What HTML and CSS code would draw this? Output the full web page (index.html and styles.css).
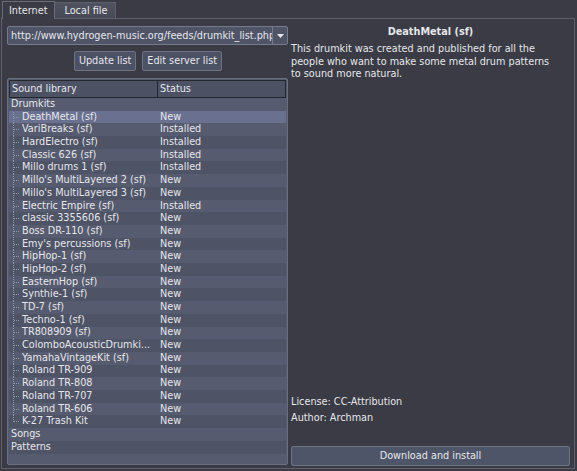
FILE: index.html
```html
<!DOCTYPE html>
<html>
<head>
<meta charset="utf-8">
<link rel="stylesheet" href="styles.css">
</head>
<body>
<div class="tabbar">
  <div class="tab active">Internet</div>
  <div class="tab">Local file</div>
</div>
<div class="pane">
  <div class="left">
    <div class="combo">
      <div class="combo-text">http://www.hydrogen-music.org/feeds/drumkit_list.php</div>
      <div class="combo-arrow"><svg width="7" height="4" viewBox="0 0 7 4"><path d="M0 0h7L3.5 4z" fill="#e8e8ee"/></svg></div>
    </div>
    <div class="buttons">
      <div class="btn">Update list</div>
      <div class="btn">Edit server list</div>
    </div>
    <div class="tree">
      <div class="header">
        <div class="hcell c1">Sound library</div>
        <div class="hcell c2">Status</div>
      </div>
      <div class="rows">
        <div class="row top"><div class="c1">Drumkits</div><div class="c2"></div></div>
        <div class="children">
          <div class="row item sel"><div class="c1">DeathMetal (sf)</div><div class="c2">New</div></div>
          <div class="row item"><div class="c1">VariBreaks (sf)</div><div class="c2">Installed</div></div>
          <div class="row item"><div class="c1">HardElectro (sf)</div><div class="c2">Installed</div></div>
          <div class="row item"><div class="c1">Classic 626 (sf)</div><div class="c2">Installed</div></div>
          <div class="row item"><div class="c1">Millo drums 1 (sf)</div><div class="c2">Installed</div></div>
          <div class="row item"><div class="c1">Millo's MultiLayered 2 (sf)</div><div class="c2">New</div></div>
          <div class="row item"><div class="c1">Millo's MultiLayered 3 (sf)</div><div class="c2">New</div></div>
          <div class="row item"><div class="c1">Electric Empire (sf)</div><div class="c2">Installed</div></div>
          <div class="row item"><div class="c1">classic 3355606 (sf)</div><div class="c2">New</div></div>
          <div class="row item"><div class="c1">Boss DR-110 (sf)</div><div class="c2">New</div></div>
          <div class="row item"><div class="c1">Emy's percussions (sf)</div><div class="c2">New</div></div>
          <div class="row item"><div class="c1">HipHop-1 (sf)</div><div class="c2">New</div></div>
          <div class="row item"><div class="c1">HipHop-2 (sf)</div><div class="c2">New</div></div>
          <div class="row item"><div class="c1">EasternHop (sf)</div><div class="c2">New</div></div>
          <div class="row item"><div class="c1">Synthie-1 (sf)</div><div class="c2">New</div></div>
          <div class="row item"><div class="c1">TD-7 (sf)</div><div class="c2">New</div></div>
          <div class="row item"><div class="c1">Techno-1 (sf)</div><div class="c2">New</div></div>
          <div class="row item"><div class="c1">TR808909 (sf)</div><div class="c2">New</div></div>
          <div class="row item"><div class="c1">ColomboAcousticDrumki...</div><div class="c2">New</div></div>
          <div class="row item"><div class="c1">YamahaVintageKit (sf)</div><div class="c2">New</div></div>
          <div class="row item"><div class="c1">Roland TR-909</div><div class="c2">New</div></div>
          <div class="row item"><div class="c1">Roland TR-808</div><div class="c2">New</div></div>
          <div class="row item"><div class="c1">Roland TR-707</div><div class="c2">New</div></div>
          <div class="row item"><div class="c1">Roland TR-606</div><div class="c2">New</div></div>
          <div class="row item last"><div class="c1">K-27 Trash Kit</div><div class="c2">New</div></div>
        </div>
        <div class="row top"><div class="c1">Songs</div><div class="c2"></div></div>
        <div class="row top"><div class="c1">Patterns</div><div class="c2"></div></div>
      </div>
    </div>
  </div>
  <div class="right">
    <div class="title">DeathMetal (sf)</div>
    <div class="desc">This drumkit was created and published for all the<br>people who want to make some metal drum patterns<br>to sound more natural.</div>
    <div class="spacer"></div>
    <div class="meta">License: CC-Attribution</div>
    <div class="meta">Author: Archman</div>
    <div class="dl">Download and install</div>
  </div>
</div>
</body>
</html>
```

FILE: styles.css
```css
html, body {
  margin: 0;
  padding: 0;
}
body {
  width: 577px;
  height: 471px;
  overflow: hidden;
  background: #3a3b44;
  font-family: "DejaVu Sans", sans-serif;
  font-size: 9.7px;
  color: #e6e7ec;
}
.tabbar {
  display: flex;
  align-items: flex-end;
  height: 18px;
  padding-left: 2px;
}
.tab {
  height: 15px;
  line-height: 15px;
  padding: 0 8px 0 9px;
  border: 1px solid #5e616c;
  border-bottom: none;
  background: linear-gradient(#50535f, #474a56);
  margin-left: -1px;
}
.tab.active {
  height: 17px;
  line-height: 18px;
  padding: 0 7px 0 6px;
  margin-left: 0;
  background: #3a3b44;
  position: relative;
  z-index: 1;
  margin-bottom: -1px;
  border-color: #6a6d78;
}
.pane {
  border: 1px solid #5e616c;
  margin: 0 2px 0 1px;
  height: 441px;
  padding: 7px 4px 1px 5px;
  display: flex;
  gap: 3px;
}
.left {
  width: 281px;
  display: flex;
  flex-direction: column;
}
.combo {
  height: 17px;
  border: 1px solid #767b8c;
  border-radius: 2px;
  background: #4f5467;
  display: flex;
}
.combo-text {
  flex: 1;
  padding-left: 3px;
  line-height: 17px;
  white-space: nowrap;
  overflow: hidden;
}
.combo-arrow {
  width: 14px;
  border-left: 1px solid #767b8c;
  display: flex;
  align-items: center;
  justify-content: center;
}
.buttons {
  display: flex;
  justify-content: center;
  gap: 6px;
  margin-top: 6px;
  padding-left: 1px;
}
.btn {
  height: 18px;
  line-height: 18px;
  padding: 0 4px;
  border: 1px solid #6d7284;
  border-radius: 2px;
  background: #4c5164;
}
.tree {
  margin-top: 7px;
  height: 383px;
  border: 1px solid #6a6f80;
  border-radius: 2px;
  padding: 1px;
  background: #565b6f;
  display: flex;
  flex-direction: column;
  overflow: hidden;
}
.header {
  display: flex;
  height: 18px;
  flex: none;
}
.hcell {
  border: 1px solid #24262e;
  background: #4c5164;
  line-height: 16px;
  padding-left: 2px;
  box-sizing: border-box;
}
.hcell.c1 { width: 149px; }
.hcell.c2 { flex: 1; border-left: none; }
.rows {
  flex: 1;
  background: repeating-linear-gradient(#565b6f 0, #565b6f 12.7px, #4e5366 12.7px, #4e5366 25.4px);
}
.row {
  display: flex;
  height: 12.7px;
  line-height: 12.7px;
}
.row .c1 {
  width: 149px;
  padding-left: 2px;
  box-sizing: border-box;
  white-space: nowrap;
  overflow: hidden;
}
.row .c2 { flex: 1; padding-left: 2px; }
.item .c1 {
  padding-left: 13px;
  background-image:
    repeating-linear-gradient(0deg, #9298ab 0 1px, transparent 1px 2px),
    repeating-linear-gradient(90deg, #9298ab 0 1px, transparent 1px 2px);
  background-size: 1px 100%, 6px 1px;
  background-position: 4px 0, 5px 6px;
  background-repeat: no-repeat;
}
.item.last .c1 {
  background-size: 1px 7px, 6px 1px;
}
.sel { background: #6a7190; }
.right {
  flex: 1;
  display: flex;
  flex-direction: column;
}
.title {
  text-align: center;
  font-weight: bold;
  margin-top: -1px;
  line-height: 13px;
}
.desc {
  line-height: 12.5px;
  margin-top: 5px;
}
.spacer { flex: 1; }
.meta {
  line-height: 16px;
}
.dl {
  margin-top: 20px;
  height: 18px;
  line-height: 18px;
  text-align: center;
  border: 1px solid #6d7284;
  border-radius: 2px;
  background: #4f5569;
  margin-bottom: 1px;
}
```
